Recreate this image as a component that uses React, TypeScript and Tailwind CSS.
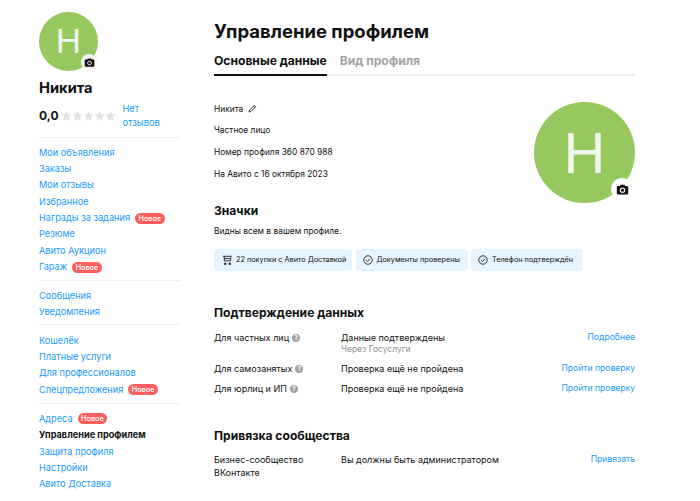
import React from 'react';

const NewBadge = () => (
  <span className="ml-[5px] inline-flex h-[11px] items-center rounded-full bg-[#ff5c5c] px-[3.5px] text-[7.3px] font-medium leading-[11px] text-white">
    Новое
  </span>
);

const CameraIcon = ({ size }: { size: number }) => (
  <svg width={size} height={size} viewBox="0 0 16 16" fill="none">
    <path
      d="M5.6 2h4.8l1 1.8h2.3c.7 0 1.3.6 1.3 1.3v7.6c0 .7-.6 1.3-1.3 1.3H2.3c-.7 0-1.3-.6-1.3-1.3V5.1c0-.7.6-1.3 1.3-1.3h2.3z"
      fill="#111"
    />
    <circle cx="8" cy="8.8" r="2.7" fill="none" stroke="#fff" strokeWidth="1.3" />
  </svg>
);

const Star = () => (
  <svg width="11.2" height="12" viewBox="0 0 12 12">
    <path d="M6 .8l1.6 3.4 3.7.5-2.7 2.6.7 3.7L6 9.2l-3.3 1.8.7-3.7L.7 4.7l3.7-.5z" fill="#e3e3e3" />
  </svg>
);

const Help = () => (
  <span className="ml-[3px] inline-flex h-[8px] w-[8px] items-center justify-center rounded-full bg-[#a3a3a3] text-[6px] font-bold leading-none text-white">
    ?
  </span>
);

const CheckIcon = () => (
  <svg width="10" height="10" viewBox="0 0 10 10" fill="none" stroke="#222" strokeWidth="0.9">
    <circle cx="5" cy="5" r="4.2" />
    <path d="M3 5.1l1.5 1.4L7 3.8" />
  </svg>
);

const CartIcon = () => (
  <svg width="11" height="11" viewBox="0 0 11 11" fill="none" stroke="#222" strokeWidth="0.9">
    <path d="M.8 1.3h8.6l-.5 1.4M2.3 1.3v4.6h6.2M2.3 3.6h6.6l-.4 2.3" />
    <circle cx="3.2" cy="8.8" r="0.9" fill="#222" />
    <circle cx="7.8" cy="8.8" r="0.9" fill="#222" />
  </svg>
);

const groupGaps = ['mt-[6.5px]', 'mt-[4.5px]', 'mt-[4px]', 'mt-[5px]'];

const menuGroups: { label: string; badge?: boolean; active?: boolean }[][] = [
  [
    { label: 'Мои объявления' },
    { label: 'Заказы' },
    { label: 'Мои отзывы' },
    { label: 'Избранное' },
    { label: 'Награды за задания', badge: true },
    { label: 'Резюме' },
    { label: 'Авито Аукцион' },
    { label: 'Гараж', badge: true },
  ],
  [{ label: 'Сообщения' }, { label: 'Уведомления' }],
  [
    { label: 'Кошелёк' },
    { label: 'Платные услуги' },
    { label: 'Для профессионалов' },
    { label: 'Спецпредложения', badge: true },
  ],
  [
    { label: 'Адреса', badge: true },
    { label: 'Управление профилем', active: true },
    { label: 'Защита профиля' },
    { label: 'Настройки' },
    { label: 'Авито Доставка' },
  ],
];

const verifyRows = [
  { label: 'Для частных лиц', status: 'Данные подтверждены', sub: 'Через Госуслуги', action: 'Подробнее' },
  { label: 'Для самозанятых', status: 'Проверка ещё не пройдена', action: 'Пройти проверку' },
  { label: 'Для юрлиц и ИП', status: 'Проверка ещё не пройдена', action: 'Пройти проверку' },
];

export default function App() {
  return (
    <div className="flex h-[501px] w-[700px] overflow-hidden bg-white pl-[39px] font-['Inter',sans-serif] text-[#111]">
      {/* Sidebar */}
      <aside className="w-[141px] shrink-0 pt-[12px]">
        <div className="relative h-[59px] w-[59px] rounded-full bg-[#97c75f]">
          <span className="flex h-full items-center justify-center font-['Liberation_Sans',sans-serif] text-[35px] text-[#f1f5ec]">
            H
          </span>
          <span className="absolute left-[42px] top-[42px] flex h-[16px] w-[16px] items-center justify-center rounded-full bg-[#f2f2f2]">
            <CameraIcon size={11} />
          </span>
        </div>
        <div className="mt-[7px] text-[14.7px] font-bold leading-[20px]">Никита</div>
        <div className="mt-[4px] flex items-center">
          <span className="text-[12px] font-bold">0,0</span>
          <span className="ml-[2px] flex">
            <Star />
            <Star />
            <Star />
            <Star />
            <Star />
          </span>
          <a className="ml-[6px] w-[40px] text-[9.3px] leading-[14px] text-[#1a9bff]">Нет отзывов</a>
        </div>
        {menuGroups.map((group, i) => (
          <div key={i} className={`${groupGaps[i]} border-t border-[#efefef] pt-[7px]`}>
            {group.map((item) => (
              <div
                key={item.label}
                className={`flex h-[16.35px] items-center whitespace-nowrap text-[9.2px] ${
                  item.active ? 'font-bold text-[#111]' : 'text-[#1a9bff]'
                }`}
              >
                {item.label}
                {item.badge && <NewBadge />}
              </div>
            ))}
          </div>
        ))}
      </aside>

      {/* Main */}
      <main className="ml-[34px] w-[421px] pt-[19px]">
        <h1 className="text-[18.5px] font-bold leading-[24px]">Управление профилем</h1>
        <div className="mt-[8px] flex h-[25px] border-b-2 border-[#ececec] text-[12.1px] font-bold leading-[20px]">
          <span className="-mb-[2px] h-[25px] border-b-2 border-[#111]">Основные данные</span>
          <span className="ml-[13px] text-[#a3a3a3]">Вид профиля</span>
        </div>

        <div className="relative mt-[22px] h-[86px] text-[8.4px]">
          <div className="flex h-[21.7px] items-center">
            Никита
            <svg className="ml-[5px]" width="9" height="9" viewBox="0 0 9 9" fill="none" stroke="#222" strokeWidth="0.9">
              <path d="M1 8l.5-2L6.2 1.3l1.5 1.5L3 7.5zM5.3 2.2l1.5 1.5" />
            </svg>
          </div>
          <div className="flex h-[21.7px] items-center">Частное лицо</div>
          <div className="flex h-[21.7px] items-center">Номер профиля 360 870 988</div>
          <div className="flex h-[21.7px] items-center">На Авито с 16 октября 2023</div>
          <div className="absolute right-0 top-[4px] h-[101px] w-[101px] rounded-full bg-[#97c75f]">
            <span className="flex h-full items-center justify-center font-['Liberation_Sans',sans-serif] text-[58px] text-[#f1f5ec]">
              H
            </span>
            <span className="absolute left-[77px] top-[76px] flex h-[22px] w-[22px] items-center justify-center rounded-full bg-white">
              <CameraIcon size={13} />
            </span>
          </div>
        </div>

        <h2 className="mt-[18px] text-[12.1px] font-bold leading-[18px]">Значки</h2>
        <p className="mt-[3px] text-[8.4px] leading-[16px]">Видны всем в вашем профиле.</p>
        <div className="mt-[10px] flex gap-[3.5px] whitespace-nowrap text-[7.3px]">
          <span className="flex h-[22px] w-[138px] items-center gap-[3px] rounded-[4px] bg-[#e5f4ff] pl-[8px]">
            <CartIcon />
            22 покупки с Авито Доставкой
          </span>
          <span className="flex h-[22px] w-[112px] items-center gap-[4px] rounded-[4px] bg-[#e5f4ff] pl-[7px]">
            <CheckIcon />
            Документы проверены
          </span>
          <span className="flex h-[22px] w-[112px] items-center gap-[4px] rounded-[4px] bg-[#e5f4ff] pl-[7px]">
            <CheckIcon />
            Телефон подтверждён
          </span>
        </div>

        <h2 className="mt-[33px] text-[12.1px] font-bold leading-[18px]">Подтверждение данных</h2>
        <div className="mt-[9px] text-[9px]">
          {verifyRows.map((row) => (
            <div key={row.label} className="mb-[7px] flex">
              <div className="flex h-[13px] w-[127px] items-center">
                {row.label}
                <Help />
              </div>
              <div className="flex-1">
                <div className="h-[13px] leading-[13px]">{row.status}</div>
                {row.sub && <div className="text-[8.5px] leading-[11px] text-[#8f8f8f]">{row.sub}</div>}
              </div>
              <a className="h-[13px] text-[8.6px] leading-[12px] text-[#1a9bff]">{row.action}</a>
            </div>
          ))}
        </div>

        <h2 className="mt-[32px] text-[12.1px] font-bold leading-[18px]">Привязка сообщества</h2>
        <div className="mt-[8px] flex text-[9px] leading-[13px]">
          <div className="w-[127px]">
            Бизнес-сообщество
            <br />
            ВКонтакте
          </div>
          <div className="flex-1">Вы должны быть администратором</div>
          <a className="text-[8.6px] text-[#1a9bff]">Привязать</a>
        </div>
      </main>
    </div>
  );
}
